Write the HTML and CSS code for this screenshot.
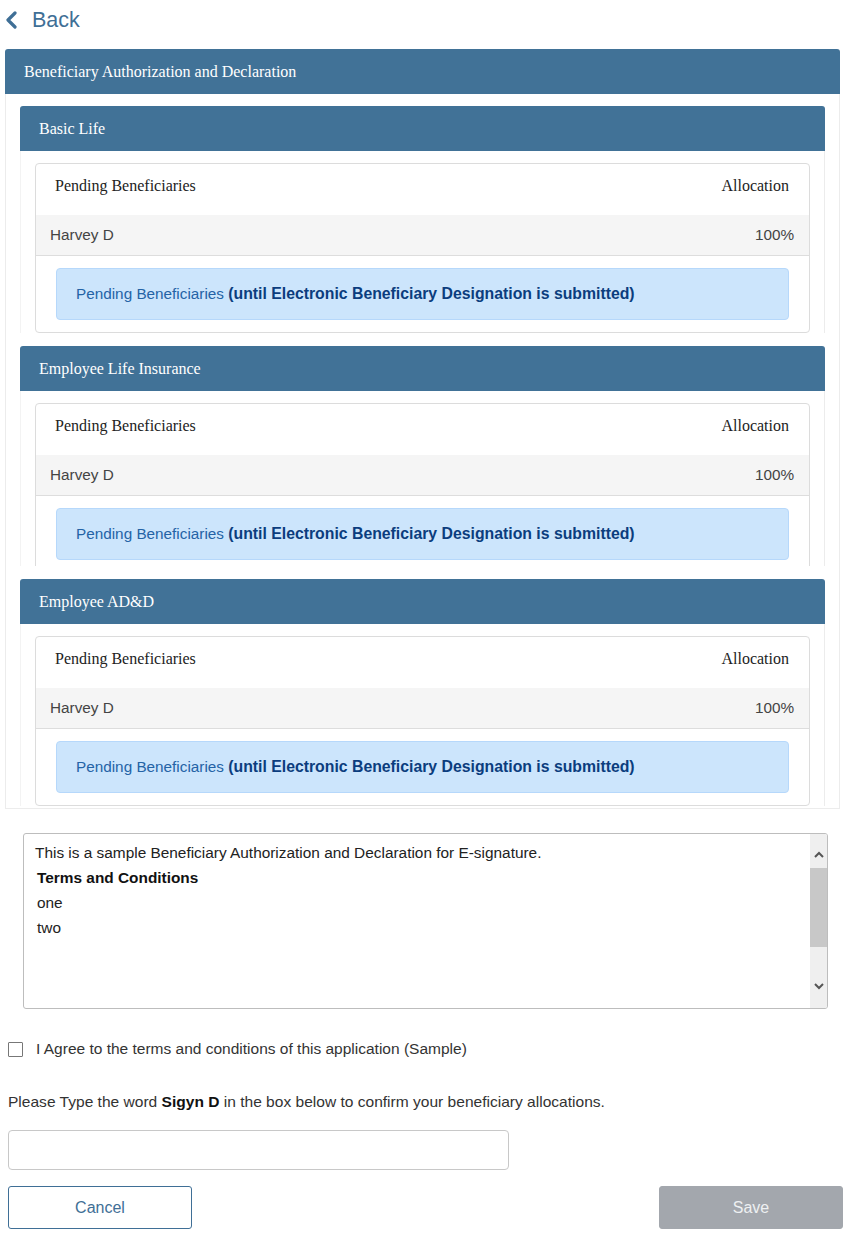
FILE: index.html
```html
<!DOCTYPE html>
<html lang="en">
<head>
<meta charset="utf-8">
<title>Beneficiary Authorization and Declaration</title>
<link rel="stylesheet" href="styles.css">
</head>
<body>
<div class="back-row">
  <svg class="back-icon" width="14" height="18" viewBox="0 0 14 18"><polyline points="11,2 4,9 11,16" fill="none" stroke="#3f6f96" stroke-width="3.2" stroke-linecap="round" stroke-linejoin="round"/></svg>
  <span class="back-label">Back</span>
</div>

<section class="outer-panel">
  <div class="outer-head">Beneficiary Authorization and Declaration</div>
  <div class="outer-body">
    <div class="inner-panel">
      <div class="inner-head">Basic Life</div>
      <div class="inner-body">
        <div class="card">
          <div class="card-head"><span>Pending Beneficiaries</span><span>Allocation</span></div>
          <div class="card-row"><span>Harvey D</span><span>100%</span></div>
          <div class="alert">Pending Beneficiaries <b>(until Electronic Beneficiary Designation is submitted)</b></div>
        </div>
      </div>
    </div>

    <div class="inner-panel">
      <div class="inner-head">Employee Life Insurance</div>
      <div class="inner-body clipped">
        <div class="card">
          <div class="card-head"><span>Pending Beneficiaries</span><span>Allocation</span></div>
          <div class="card-row"><span>Harvey D</span><span>100%</span></div>
          <div class="alert">Pending Beneficiaries <b>(until Electronic Beneficiary Designation is submitted)</b></div>
        </div>
      </div>
    </div>

    <div class="inner-panel">
      <div class="inner-head">Employee AD&amp;D</div>
      <div class="inner-body">
        <div class="card">
          <div class="card-head"><span>Pending Beneficiaries</span><span>Allocation</span></div>
          <div class="card-row"><span>Harvey D</span><span>100%</span></div>
          <div class="alert">Pending Beneficiaries <b>(until Electronic Beneficiary Designation is submitted)</b></div>
        </div>
      </div>
    </div>
  </div>
</section>

<div class="terms-box">
  <div class="terms-text">
    <div>This is a sample Beneficiary Authorization and Declaration for E-signature.</div>
    <div class="indent"><b>Terms and Conditions</b></div>
    <div class="indent">one</div>
    <div class="indent">two</div>
  </div>
  <div class="scrollbar">
    <svg class="arrow arrow-up" width="12" height="10" viewBox="0 0 12 10"><polyline points="2,7 6,3 10,7" fill="none" stroke="#555" stroke-width="2"/></svg>
    <div class="track"><div class="thumb"></div></div>
    <svg class="arrow arrow-down" width="12" height="10" viewBox="0 0 12 10"><polyline points="2,3 6,7 10,3" fill="none" stroke="#555" stroke-width="2"/></svg>
  </div>
</div>

<label class="agree"><span class="checkbox"></span><span>I Agree to the terms and conditions of this application (Sample)</span></label>

<p class="confirm">Please Type the word <b>Sigyn D</b> in the box below to confirm your beneficiary allocations.</p>

<div class="sign-input"></div>

<div class="actions">
  <button class="btn btn-cancel">Cancel</button>
  <button class="btn btn-save">Save</button>
</div>
</body>
</html>
```

FILE: styles.css
```css
* { box-sizing: border-box; }
body {
  margin: 0;
  font-family: "Liberation Sans", Arial, sans-serif;
  font-size: 15.4px;
  color: #333;
  background: #fff;
}
.back-row {
  height: 40px;
  display: flex;
  align-items: center;
  padding-left: 4px;
  gap: 14px;
}
.back-icon { margin-top: -1px; }
.back-label {
  font-size: 21.5px;
  color: #3f6f96;
  line-height: 40px;
}
.outer-panel {
  margin: 9px 15px 0 5px;
}
.outer-head, .inner-head {
  background: #417297;
  color: #fff;
  font-family: "Liberation Serif", "Times New Roman", serif;
  font-size: 16px;
  height: 45px;
  line-height: 45px;
  border-radius: 3px 3px 0 0;
}
.outer-head { padding-left: 19px; }
.inner-head { padding-left: 19px; }
.outer-body {
  border: 1px solid #ececec;
  border-top: none;
  padding: 12px 14px 2px 14px;
  display: flex;
  flex-direction: column;
  gap: 13px;
}
.inner-body {
  padding: 12px 14px 0 14px;
  border-left: 1px solid #f3f3f3;
  border-right: 1px solid #ececec;
}
.inner-body.clipped {
  height: 175px;
  overflow: hidden;
}
.card {
  border: 1px solid #dcdcdc;
  border-radius: 4px;
  padding-bottom: 12px;
}
.card-head {
  display: flex;
  justify-content: space-between;
  font-family: "Liberation Serif", "Times New Roman", serif;
  font-size: 16px;
  color: #222;
  padding: 13px 20px 0 19px;
  height: 51px;
  line-height: 18px;
}
.card-row {
  display: flex;
  justify-content: space-between;
  background: #f5f5f5;
  border-bottom: 1px solid #dddddd;
  height: 41px;
  line-height: 40px;
  font-size: 15.3px;
  color: #444;
  padding: 0 15px 0 14px;
}
.alert {
  margin: 12px 20px 0 20px;
  background: #cce5fc;
  border: 1px solid #b6d8fb;
  border-radius: 4px;
  height: 52px;
  line-height: 50px;
  padding-left: 19px;
  font-size: 15.3px;
  color: #2463a6;
}
.alert b { color: #0b3d7e; font-size: 15.8px; }

.terms-box {
  margin: 24px 27px 0 23px;
  height: 176px;
  border: 1px solid #bdbdbd;
  border-radius: 3px;
  display: flex;
  overflow: hidden;
}
.terms-text {
  flex: 1;
  padding: 6px 11px;
  line-height: 25px;
  color: #222;
}
.terms-text b { color: #111; }
.indent { padding-left: 2px; }
.scrollbar {
  width: 17px;
  background: #efefef;
  display: flex;
  flex-direction: column;
  align-items: center;
}
.arrow { flex: none; }
.arrow-up { margin: 16px 0 8px; }
.arrow-down { margin: 10px 0 17px; }
.track {
  flex: 1;
  width: 100%;
  display: flex;
  flex-direction: column;
}
.thumb {
  height: 79px;
  background: #c8c8c8;
}
.agree {
  margin: 31px 0 0 8px;
  display: flex;
  align-items: center;
  gap: 13px;
  line-height: 18px;
  font-size: 15.5px;
  color: #333;
}
.checkbox {
  width: 15px;
  height: 15px;
  border: 1px solid #777;
  border-radius: 1px;
  background: #fff;
  flex: none;
}
.confirm {
  margin: 34px 0 0 8px;
  line-height: 20px;
  font-size: 15.55px;
  color: #333;
}
.confirm b { color: #111; }
.sign-input {
  margin: 18px 0 0 8px;
  width: 501px;
  height: 40px;
  border: 1px solid #c8c8c8;
  border-radius: 4px;
}
.actions {
  margin: 16px 12px 0 8px;
  display: flex;
  justify-content: space-between;
}
.btn {
  width: 184px;
  height: 43px;
  border-radius: 3px;
  font-family: "Liberation Sans", Arial, sans-serif;
  font-size: 16px;
}
.btn-cancel {
  background: #fff;
  border: 1px solid #3f6f96;
  color: #3f6f96;
}
.btn-save {
  background: #a3a7ad;
  border: 1px solid #a3a7ad;
  color: #eef0f2;
}
```
